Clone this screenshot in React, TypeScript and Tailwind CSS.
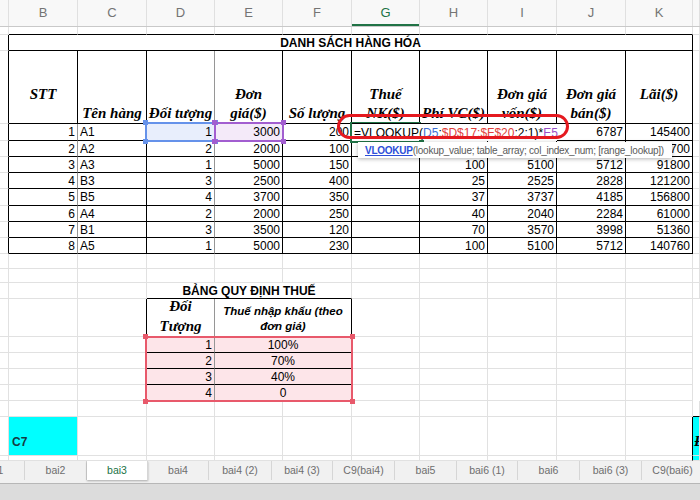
import type { ReactNode } from 'react';

// Column widths: A (cut) B C D E F G H I J K L (cut)
const COLS = 'grid grid-cols-[9px_69px_69px_68px_68px_69px_68px_68px_69px_69px_67px_7px]';

const RC = { g: 'border-r-[#e1e1e1]', k: 'border-r-black', m: 'border-r-[#969696]' };
const BC = { g: 'border-b-[#e1e1e1]', k: 'border-b-black' };

type Cell = { t?: ReactNode; r?: 'g' | 'k' | 'm'; b?: 'g' | 'k'; span?: string; cls?: string };

const NUM = 'flex items-center justify-end pr-[2px]';
const TXT = 'flex items-center pl-[2px]';
const CEN = 'flex items-center justify-center';
const HEAD =
  "flex flex-col items-center justify-end text-center font-['Liberation_Serif',serif] text-[15px] font-bold italic leading-[19px]";

const LETTERS = ['', 'B', 'C', 'D', 'E', 'F', 'G', 'H', 'I', 'J', 'K', ''];

// row 2: G–K are mostly hidden under the function hint, only the tail "700" shows
const ITEMS = [
  ['1', 'A1', '1', '3000', '200', '', '', '', '6787', '145400'],
  ['2', 'A2', '2', '2000', '100', '', '', '', '', '700'],
  ['3', 'A3', '1', '5000', '150', '', '100', '5100', '5712', '91800'],
  ['4', 'B3', '3', '2500', '400', '', '25', '2525', '2828', '121200'],
  ['5', 'B5', '4', '3700', '350', '', '37', '3737', '4185', '156800'],
  ['6', 'A4', '2', '2000', '250', '', '40', '2040', '2284', '61000'],
  ['7', 'B1', '3', '3500', '120', '', '70', '3570', '3998', '51360'],
  ['8', 'A5', '1', '5000', '230', '', '100', '5100', '5712', '140760'],
];
const ROW_H = ['h-[17px]', 'h-[16px]', 'h-[16px]', 'h-[16px]', 'h-[17px]', 'h-[16px]', 'h-[16px]', 'h-[16px]'];

const TAX = [
  ['1', '100%'],
  ['2', '70%'],
  ['3', '40%'],
  ['4', '0'],
];

const TABS = [
  ['bai1', 'w-[62px]'],
  ['bai2', 'w-[62px]'],
  ['bai3', 'w-[61px]'],
  ['bai4', 'w-[61px]'],
  ['bai4 (2)', 'w-[63px]'],
  ['bai4 (3)', 'w-[61px]'],
  ['C9(bai4)', 'w-[62px]'],
  ['bai5', 'w-[62px]'],
  ['bai6 (1)', 'w-[61px]'],
  ['bai6', 'w-[62px]'],
  ['bai6 (3)', 'w-[62px]'],
  ['C9(bai6)', 'w-[62px]'],
];

function SheetRow({ h, cells }: { h: string; cells: Cell[] }) {
  return (
    <div className={`${COLS} ${h}`}>
      {cells.map((c, i) => (
        <div
          key={i}
          className={`min-w-0 overflow-hidden whitespace-nowrap border-r border-b ${RC[c.r ?? 'g']} ${BC[c.b ?? 'g']} ${c.span ?? ''} ${c.cls ?? ''}`}
        >
          {c.t}
        </div>
      ))}
    </div>
  );
}

function blank(n: number): Cell[] {
  return Array.from({ length: n }, () => ({}));
}

function dataRow(d: string[], first: boolean): Cell[] {
  const [stt, name, dt, dg, sl, nk, vc, von, ban, lai] = d;
  return [
    { r: 'k' },
    { t: stt, r: 'm', b: 'k', cls: NUM },
    { t: name, r: 'k', b: 'k', cls: TXT },
    { t: dt, r: 'm', b: 'k', cls: `${NUM} ${first ? 'bg-[#e8eefc]' : ''}` },
    { t: dg, r: 'k', b: 'k', cls: `${NUM} ${first ? 'bg-[#f4eaf9]' : ''}` },
    { t: sl, r: 'k', b: 'k', cls: NUM },
    { t: nk, r: 'k', b: 'k', cls: NUM },
    { t: vc, r: 'k', b: 'k', cls: NUM },
    { t: von, r: 'k', b: 'k', cls: NUM },
    { t: ban, r: 'k', b: 'k', cls: NUM },
    { t: lai, r: 'k', b: 'k', cls: NUM },
    {},
  ];
}

function Two({ a, b }: { a: string; b: string }) {
  return (
    <>
      <span>{a}</span>
      <span>{b}</span>
    </>
  );
}

function Selection({ box, handle }: { box: string; handle: string }) {
  return (
    <div className={`pointer-events-none absolute ${box}`}>
      <span className={`absolute -left-[4px] -top-[4px] h-[5px] w-[5px] ${handle}`} />
      <span className={`absolute -right-[4px] -top-[4px] h-[5px] w-[5px] ${handle}`} />
      <span className={`absolute -bottom-[4px] -left-[4px] h-[5px] w-[5px] ${handle}`} />
      <span className={`absolute -bottom-[4px] -right-[4px] h-[5px] w-[5px] ${handle}`} />
    </div>
  );
}

export default function App() {
  const taxRow = (n: string, pct: string): Cell[] => [
    {},
    {},
    { r: 'k' },
    { t: n, r: 'm', b: 'k', cls: `${NUM} bg-[#fde5e9]` },
    { t: pct, r: 'k', b: 'k', span: 'col-span-2', cls: `${CEN} bg-[#fde5e9]` },
    ...blank(5),
  ];

  return (
    <div className="relative h-[500px] w-[700px] overflow-hidden bg-white font-['Liberation_Sans',Arial,sans-serif] text-[12px] text-black">
      {/* column letters */}
      <div className={`${COLS} h-[27px] border-b border-[#c9c9c9] bg-[#f8f8f8]`}>
        {LETTERS.map((l, i) => (
          <div
            key={i}
            className={`flex items-center justify-center border-r border-[#e0e0e0] text-[13px] ${
              l === 'G' ? 'text-[#217346] shadow-[inset_0_-2px_0_#217346]' : 'text-[#747474]'
            }`}
          >
            {l}
          </div>
        ))}
      </div>

      {/* DANH SÁCH HÀNG HÓA */}
      <SheetRow h="h-[8px]" cells={[{}, ...Array.from({ length: 10 }, () => ({ b: 'k' as const })), {}]} />
      <SheetRow
        h="h-[16px]"
        cells={[
          { r: 'k' },
          { t: 'DANH SÁCH HÀNG HÓA', r: 'k', b: 'k', span: 'col-span-10', cls: `${CEN} font-bold` },
          {},
        ]}
      />
      <SheetRow
        h="h-[73px]"
        cells={[
          { r: 'k' },
          { t: 'STT', r: 'k', b: 'k', cls: `${HEAD} pb-[19px]` },
          { t: 'Tên hàng', r: 'k', b: 'k', cls: HEAD },
          { t: 'Đối tượng', r: 'm', b: 'k', cls: HEAD },
          { t: <Two a="Đơn" b="giá($)" />, r: 'k', b: 'k', cls: HEAD },
          { t: 'Số lượng', r: 'k', b: 'k', cls: HEAD },
          { t: <Two a="Thuế" b="NK($)" />, r: 'k', b: 'k', cls: HEAD },
          { t: 'Phí VC($)', r: 'k', b: 'k', cls: HEAD },
          { t: <Two a="Đơn giá" b="vốn($)" />, r: 'k', b: 'k', cls: HEAD },
          { t: <Two a="Đơn giá" b="bán($)" />, r: 'k', b: 'k', cls: HEAD },
          { t: 'Lãi($)', r: 'k', b: 'k', cls: `${HEAD} pb-[19px]` },
          {},
        ]}
      />
      {ITEMS.map((d, i) => (
        <SheetRow key={i} h={ROW_H[i]} cells={dataRow(d, i === 0)} />
      ))}

      {/* BẢNG QUY ĐỊNH THUẾ */}
      <SheetRow h="h-[15px]" cells={blank(12)} />
      <SheetRow h="h-[14px]" cells={blank(12)} />
      <SheetRow
        h="h-[16px]"
        cells={[
          {},
          {},
          {},
          { t: 'BẢNG QUY ĐỊNH THUẾ', b: 'k', span: 'col-span-3', cls: `${CEN} font-bold` },
          ...blank(6),
        ]}
      />
      <SheetRow
        h="h-[38px]"
        cells={[
          {},
          {},
          { r: 'k' },
          {
            t: <Two a="Đối" b="Tượng" />,
            r: 'm',
            b: 'k',
            cls: "flex flex-col items-center justify-end font-['Liberation_Serif',serif] text-[15px] font-bold italic leading-[20px]",
          },
          {
            t: <Two a="Thuế nhập khẩu (theo" b="đơn giá)" />,
            r: 'k',
            b: 'k',
            span: 'col-span-2',
            cls: 'flex flex-col items-center justify-end pb-[2px] text-[11.5px] font-bold italic leading-[15px]',
          },
          ...blank(5),
        ]}
      />
      {TAX.map(([n, p]) => (
        <SheetRow key={n} h="h-[16px]" cells={taxRow(n, p)} />
      ))}
      <SheetRow h="h-[16px]" cells={[...blank(11), { b: 'k' }]} />
      <SheetRow
        h="h-[39px]"
        cells={[
          {},
          { t: 'C7', cls: 'flex items-end bg-[#00ffff] pb-[4px] pl-[3px] font-bold text-[#163a42]' },
          ...blank(8),
          { r: 'k' },
          {
            t: 'Đ',
            cls: "flex items-end bg-[#00ffff] pb-[3px] pl-[1px] font-['Liberation_Serif',serif] text-[15px] font-bold italic",
          },
        ]}
      />
      <SheetRow h="h-[5px]" cells={[...blank(10), { r: 'k' }, { cls: 'bg-[#00ffff]' }]} />

      {/* sheet tabs */}
      <div className="flex h-[23px] items-start overflow-hidden border-b border-[#b7b7b7] bg-[#f1f1f1]">
        <div className="-ml-[37px] flex shrink-0">
          {TABS.map(([name, w]) => (
            <div
              key={name}
              className={`flex h-[19px] shrink-0 items-center justify-center border-r border-[#d6d6d6] text-[10.5px] ${w} ${
                name === 'bai3'
                  ? 'bg-white text-[#217346] shadow-[0_1px_2px_rgba(0,0,0,0.3)]'
                  : 'text-[#6e6e6e]'
              }`}
            >
              {name}
            </div>
          ))}
        </div>
      </div>
      <div className="h-[16px] bg-[#dcdcdc]" />

      {/* selections */}
      <Selection box="left-[145px] top-[122px] h-[20px] w-[71px] border-2 border-[#6592ea]" handle="bg-[#6592ea]" />
      <Selection box="left-[214px] top-[122px] h-[20px] w-[70px] border-2 border-[#a25ed0]" handle="bg-[#a25ed0]" />
      <Selection box="left-[145px] top-[336px] h-[66px] w-[208px] border-2 border-[#e8596b]" handle="bg-[#e8596b]" />

      {/* formula being edited in G5 */}
      <div className="absolute left-[352px] top-[124px] flex h-[17px] w-[205px] items-center whitespace-nowrap bg-white pl-[2px] text-[12px]">
        <span>=VLOOKUP(</span>
        <span className="text-[#3d6fd6]">D5</span>
        <span>;</span>
        <span className="text-[#e2403b]">$D$17:$F$20</span>
        <span>;2;1)*</span>
        <span className="text-[#9a4fc6]">E5</span>
      </div>
      <div className="pointer-events-none absolute left-[350px] top-[122px] h-[21px] w-[71px] border-b-2 border-l-2 border-t border-[#217346]">
        <span className="absolute -bottom-[4px] -right-[3px] h-[5px] w-[5px] bg-[#217346]" />
      </div>

      {/* function hint */}
      <div className="absolute left-[358px] top-[142px] flex h-[16px] w-[314px] items-center whitespace-nowrap bg-white pl-[7px] text-[10px] tracking-[-0.25px] text-[#5a5a5a] shadow-[0_1px_4px_rgba(0,0,0,0.3)]">
        <span className="font-bold text-[#2e4fd8] underline">VLOOKUP</span>
        <span>(lookup_value; table_array; col_index_num; [range_lookup])</span>
      </div>

      {/* red highlight */}
      <div className="pointer-events-none absolute left-[337px] top-[114px] h-[25px] w-[232px] rounded-[13px] border-[3px] border-[#e5191f]" />
    </div>
  );
}
